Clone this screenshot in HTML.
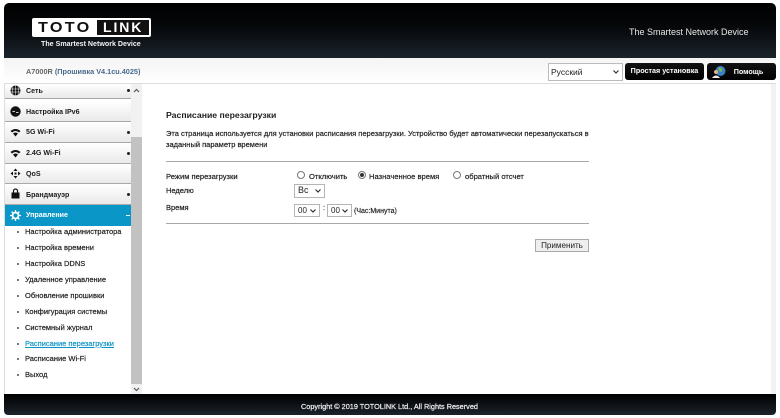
<!DOCTYPE html>
<html><head><meta charset="utf-8">
<style>
html,body{margin:0;padding:0;background:#fff}
body{width:780px;height:418px;position:relative;overflow:hidden;font-family:"Liberation Sans",sans-serif;color:#222}
#w{position:absolute;left:0;top:0;width:780px;height:418px;filter:blur(.3px)}
.a{position:absolute;white-space:nowrap}
.t{font-size:7.500px;line-height:10px;color:#1c1c1c;-webkit-text-stroke:.18px #1c1c1c}
.t2{font-size:7.600px}
.m{position:absolute;left:5px;width:126px;background:linear-gradient(#fff,#e9e9e9);border-bottom:1px solid #a9a9a9;box-sizing:border-box}
.mt{position:absolute;left:26px;font-size:7.100px;line-height:10px;font-weight:bold;color:#1c1c1c;white-space:nowrap}
.pl{position:absolute;left:127px;width:3px;height:3px;border-radius:50%;background:#222}
.s{position:absolute;left:25px;font-size:7.500px;line-height:10px;color:#1c1c1c;-webkit-text-stroke:.18px #1c1c1c;white-space:nowrap}
.d{position:absolute;left:17px;width:2px;height:2px;background:#777}
.sel{position:absolute;background:#fff;border:1px solid #b5b5b5;box-sizing:border-box;font-size:8.500px;line-height:11px;color:#222;padding-left:2px}
.sel svg{position:absolute;top:50%;margin-top:-2px;right:3px}
.r{position:absolute;width:8px;height:8px;border:1px solid #777;border-radius:50%;background:#fff;box-sizing:border-box}
.hr{position:absolute;left:166px;width:423px;height:1px;background:#a8a8a8}
.btn{position:absolute;background:linear-gradient(#111,#000);border-radius:3px;color:#fff;font-size:7.200px;font-weight:bold;text-align:center}
</style></head><body><div id="w">
<div class="a" style="left:4px;top:3px;width:772px;height:55px;background:linear-gradient(#000 0%,#050709 40%,#1b232b 100%);border-radius:5px 5px 0 0"></div>
<div class="a" style="left:32px;top:18px;width:119px;height:19px;background:#fff;border-radius:2px"></div>
<div class="a" style="left:38px;top:20px;font-size:15px;line-height:15px;font-weight:bold;color:#111;letter-spacing:2.100px;transform:scaleX(1.080);transform-origin:left">TOTO</div>
<div class="a" style="left:97px;top:20px;width:52px;height:15px;background:#111"></div>
<div class="a" style="left:103px;top:20px;font-size:14px;line-height:15px;font-weight:bold;color:#fff;letter-spacing:1.900px">LINK</div>
<div class="a" style="left:41px;top:39px;font-size:7.100px;line-height:10px;font-weight:bold;color:#f2f2f2">The Smartest Network Device</div>
<div class="a" style="left:629px;top:26px;font-size:9px;line-height:12px;color:#e6e6e6">The Smartest Network Device</div>

<div class="a" style="left:4px;top:58px;width:772px;height:26px;background:linear-gradient(#f4f4f4,#fff);border-bottom:1px solid #ddd;box-sizing:border-box"></div>
<div class="a" style="left:26px;top:67px;font-size:7.300px;line-height:10px;font-weight:bold;color:#666">A7000R <span style="color:#4a6b8c">(Прошивка V4.1cu.4025)</span></div>
<div class="sel" style="left:548px;top:63px;width:75px;height:18px;line-height:16px;border-color:#bbb">Русский<svg width="6" height="4" viewBox="0 0 6 4"><path d="M.5.5 3 3 5.500.5" fill="none" stroke="#333" stroke-width="1.200"/></svg></div>
<div class="btn" style="left:625px;top:63px;width:79px;height:17px;line-height:15px">Простая установка</div>
<div class="btn" style="left:707px;top:63px;width:69px;height:17px;line-height:17px;padding-left:14px;box-sizing:border-box">Помощь</div>
<svg class="a" style="left:712px;top:65px" width="14" height="13" viewBox="0 0 14 13"><circle cx="8.500" cy="6" r="5" fill="#3b82c4"/><path d="M6 3q3-1 4 1t-2 3z" fill="#7fb648"/><circle cx="4" cy="7" r="2" fill="#e0b080"/><path d="M0 13q4-5 8 0z" fill="#eee"/></svg>

<div class="a" style="left:4px;top:84px;width:1px;height:312px;background:#ddd"></div>
<div class="a" style="left:771px;top:84px;width:5px;height:312px;background:#f2f2f2"></div>
<div class="a" style="left:131px;top:84px;width:11px;height:312px;background:#f1f1f1"></div>
<div class="a" style="left:131px;top:137px;width:11px;height:247px;background:#c2c2c2"></div>
<svg class="a" style="left:133px;top:88px" width="7" height="5" viewBox="0 0 7 5"><path d="M1 4 3.500 1.500 6 4" fill="none" stroke="#555" stroke-width="1.200"/></svg>
<svg class="a" style="left:133px;top:387px" width="7" height="5" viewBox="0 0 7 5"><path d="M1 1 3.500 3.500 6 1" fill="none" stroke="#555" stroke-width="1.200"/></svg>

<div class="m" style="top:84px;height:15px"></div>
<div class="m" style="top:101px;height:21px"></div>
<div class="m" style="top:122px;height:21px"></div>
<div class="m" style="top:143px;height:21px"></div>
<div class="m" style="top:164px;height:20px"></div>
<div class="m" style="top:184px;height:21px"></div>
<div class="a" style="left:5px;top:205px;width:126px;height:21px;background:#0a96c6"></div>

<div class="mt" style="top:86px">Сеть</div><div class="pl" style="top:89px"></div>
<div class="mt" style="top:107px">Настройка IPv6</div>
<div class="mt" style="top:127px">5G Wi-Fi</div><div class="pl" style="top:131px"></div>
<div class="mt" style="top:148px">2.4G Wi-Fi</div><div class="pl" style="top:152px"></div>
<div class="mt" style="top:169px">QoS</div>
<div class="mt" style="top:190px">Брандмауэр</div><div class="pl" style="top:193px"></div>
<div class="mt" style="top:210px;color:#fff">Управление</div>
<div class="a" style="left:126px;top:215px;width:4px;height:1px;background:#fff"></div>

<svg class="a" style="left:10px;top:85px" width="11" height="11" viewBox="0 0 11 11"><circle cx="5.500" cy="5.500" r="5" fill="#111"/><path d="M.5 4h10M.5 7h10M5.500.5v10M3 1.500q-1 4 0 8M8 1.500q1 4 0 8" stroke="#fff" stroke-width=".5" fill="none"/></svg>
<svg class="a" style="left:10px;top:106px" width="11" height="11" viewBox="0 0 11 11"><circle cx="5.500" cy="5.500" r="5.200" fill="#111"/><path d="M2.500 5.500h2.500M6 6.500h2.500" stroke="#ccc" stroke-width="1"/></svg>
<svg class="a" style="left:10px;top:128px" width="11" height="9" viewBox="0 0 11 9"><path d="M.5 3Q5.500-1 10.500 3L9 4.500Q5.500 1.500 2 4.500zM3 5.500Q5.500 3.500 8 5.500L5.500 8.500z" fill="#111"/></svg>
<svg class="a" style="left:10px;top:149px" width="11" height="9" viewBox="0 0 11 9"><path d="M.5 3Q5.500-1 10.500 3L9 4.500Q5.500 1.500 2 4.500zM3 5.500Q5.500 3.500 8 5.500L5.500 8.500z" fill="#111"/></svg>
<svg class="a" style="left:10px;top:168px" width="11" height="11" viewBox="0 0 11 11"><path d="M5.500.5 7.500 3h-4zM5.500 10.500 3.500 8h4zM.5 5.500 3 3.500v4zM10.500 5.500 8 7.500v-4z" fill="#111"/><rect x="4.500" y="4.500" width="2" height="2" fill="#111"/></svg>
<svg class="a" style="left:11px;top:188px" width="9" height="11" viewBox="0 0 9 11"><rect x="0.500" y="4.500" width="8" height="6" fill="#111"/><path d="M2.500 5V3a2 2 0 0 1 4 0v2" fill="none" stroke="#111" stroke-width="1.200"/></svg>
<svg class="a" style="left:10px;top:210px" width="11" height="11" viewBox="0 0 11 11"><circle cx="5.500" cy="5.500" r="3" fill="none" stroke="#fff" stroke-width="1.800"/><path d="M5.500 0v2M5.500 9v2M0 5.500h2M9 5.500h2M1.600 1.600 3 3M8 8l1.400 1.400M1.600 9.400 3 8M8 3l1.400-1.400" stroke="#fff" stroke-width="1.300"/></svg>

<div class="d" style="top:231px"></div><div class="s" style="top:227px">Настройка администратора</div>
<div class="d" style="top:247px"></div><div class="s" style="top:243px">Настройка времени</div>
<div class="d" style="top:263px"></div><div class="s" style="top:259px">Настройка DDNS</div>
<div class="d" style="top:279px"></div><div class="s" style="top:275px">Удаленное управление</div>
<div class="d" style="top:295px"></div><div class="s" style="top:291px">Обновление прошивки</div>
<div class="d" style="top:311px"></div><div class="s" style="top:307px">Конфигурация системы</div>
<div class="d" style="top:327px"></div><div class="s" style="top:323px">Системный журнал</div>
<div class="d" style="top:343px"></div><div class="s" style="top:339px;color:#0b93c4;-webkit-text-stroke:.18px #0b93c4;text-decoration:underline">Расписание перезагрузки</div>
<div class="d" style="top:358px"></div><div class="s" style="top:354px">Расписание Wi-Fi</div>
<div class="d" style="top:374px"></div><div class="s" style="top:370px">Выход</div>

<div class="a" style="left:166px;top:109px;font-size:8.700px;line-height:12px;font-weight:bold;color:#1e1e1e">Расписание перезагрузки</div>
<div class="a t" style="left:166px;top:129px">Эта страница используется для установки расписания перезагрузки. Устройство будет автоматически перезапускаться в</div>
<div class="a t" style="left:166px;top:140px">заданный параметр времени</div>
<div class="hr" style="top:161px"></div>
<div class="a t t2" style="left:166px;top:172px">Режим перезагрузки</div>
<div class="r" style="left:297px;top:171px"></div>
<div class="a t t2" style="left:309px;top:172px">Отключить</div>
<div class="r" style="left:358px;top:171px"></div>
<div class="a" style="left:360px;top:173px;width:4px;height:4px;border-radius:50%;background:#333"></div>
<div class="a t t2" style="left:369px;top:172px">Назначенное время</div>
<div class="r" style="left:453px;top:171px"></div>
<div class="a t t2" style="left:465px;top:172px">обратный отсчет</div>
<div class="a t" style="left:166px;top:186px">Неделю</div>
<div class="sel" style="left:294px;top:184px;width:31px;height:14px;font-size:9px;padding-left:3px">Вс<svg width="6" height="4" viewBox="0 0 6 4"><path d="M.5.5 3 3 5.500.5" fill="none" stroke="#333" stroke-width="1.200"/></svg></div>
<div class="a t" style="left:166px;top:203px">Время</div>
<div class="sel" style="left:294px;top:204px;width:26px;height:13px;line-height:11px;font-size:8px;padding-left:3px">00<svg width="6" height="4" viewBox="0 0 6 4"><path d="M.5.5 3 3 5.500.5" fill="none" stroke="#333" stroke-width="1.200"/></svg></div>
<div class="a t" style="left:323px;top:203px;color:#777">:</div>
<div class="sel" style="left:327px;top:204px;width:25px;height:13px;line-height:11px;font-size:8px;padding-left:3px">00<svg width="6" height="4" viewBox="0 0 6 4"><path d="M.5.5 3 3 5.500.5" fill="none" stroke="#333" stroke-width="1.200"/></svg></div>
<div class="a t" style="left:354px;top:207px;font-size:7px">(Час:Минута)</div>
<div class="hr" style="top:223px"></div>
<div class="a" style="left:535px;top:239px;width:54px;height:13px;background:#efefef;border:1px solid #aaa;box-sizing:border-box;font-size:8.100px;line-height:11px;text-align:center;color:#222">Применить</div>

<div class="a" style="left:4px;top:394px;width:772px;height:21px;background:linear-gradient(#000,#1b222a);border-radius:0 0 4px 4px"></div>
<div class="a" style="left:301px;top:402px;font-size:7.300px;line-height:10px;color:#f4f4f4;-webkit-text-stroke:.2px #f4f4f4">Copyright © 2019 TOTOLINK Ltd., All Rights Reserved</div>
</div></body></html>
